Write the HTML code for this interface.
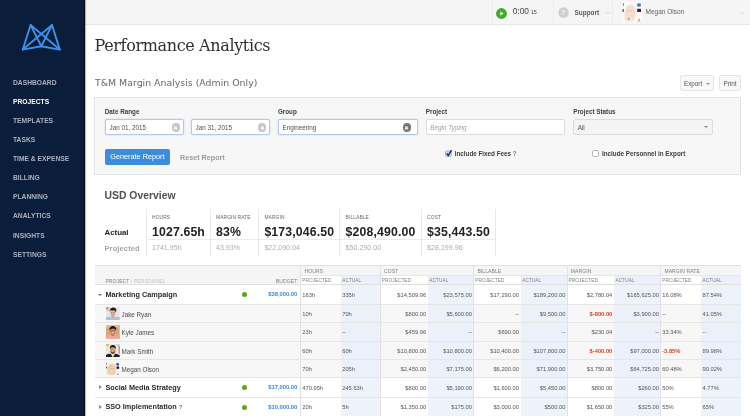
<!DOCTYPE html>
<html lang="en"><head><meta charset="utf-8"><title>Performance Analytics</title>
<style>
*{box-sizing:border-box;margin:0;padding:0}
html,body{width:750px;height:416px;overflow:hidden;background:#fff}
#wrap{position:absolute;left:0;top:0;width:750px;height:416px;will-change:transform;opacity:.999}
body{font-family:"Liberation Sans",Arial,sans-serif;color:#333;position:relative;-webkit-font-smoothing:antialiased}
.abs{position:absolute;white-space:nowrap}
#side{position:absolute;left:0;top:0;width:85.2px;height:416px;background:#0a1d3a;border-right:1.3px solid #050b16;box-shadow:.5px 0 1.6px rgba(0,0,0,.55);z-index:5}
#side .mi{position:absolute;left:13px;font-size:7.5px;font-weight:bold;letter-spacing:0;color:#a7b0bf;line-height:10px;white-space:nowrap;transform:scaleX(.893);transform-origin:0 50%}
#side .mi.on{color:#fff}
#top{position:absolute;left:84px;top:0;width:666px;height:25.3px;background:#f5f5f5;border-bottom:1px solid #e6e6e6}
.vd{position:absolute;top:0;width:1px;height:24px;background:#ececec}
h1{position:absolute;left:94.5px;top:34.3px;font-family:"DejaVu Serif","Liberation Serif",serif;font-weight:normal;font-size:16px;letter-spacing:-.36px;line-height:24px;color:#303030;white-space:nowrap}
h2{position:absolute;left:95px;top:76.5px;font-family:"DejaVu Sans","Liberation Sans",sans-serif;font-weight:normal;font-size:9.38px;line-height:12px;color:#6a6a6a;white-space:nowrap}
.btn{position:absolute;top:75px;height:15.5px;border:1px solid #e6e6e6;border-radius:2px;background:#f8f8f8;font-size:6.3px;line-height:15.4px;color:#555;text-align:center;white-space:nowrap}
#panel{position:absolute;left:94.4px;top:97px;width:646.8px;height:78px;background:#f7f7f7;border:1px solid #e3e3e3}
.lbl{position:absolute;top:107.2px;font-size:6.3px;font-weight:bold;color:#3c3c3c;line-height:9px;white-space:nowrap}
.inp{position:absolute;top:119.4px;height:16px;border:1px solid #b4c8ec;border-radius:2px;background:#fff;font-size:6.3px;line-height:15.2px;color:#505050;padding-left:3.7px;white-space:nowrap;box-shadow:0 0 1.6px rgba(140,175,235,.5)}
.inp.plain{border-color:#dcdcdc;box-shadow:none}
.clr{position:absolute;top:2.9px;width:8.6px;height:8.6px;border-radius:50%;background:#c6c6c6}
.clr.dk{background:#777}
.clr:before,.clr:after{content:"";position:absolute;left:3.9px;top:2.5px;width:.8px;height:3.6px;background:#fff;transform:rotate(45deg)}
.clr:after{transform:rotate(-45deg)}
.cb{position:absolute;top:150.6px;width:6px;height:6px;border:1px solid #9a9a9a;border-radius:1.5px;background:#fff}
.cbl{position:absolute;top:149.1px;font-size:6.3px;font-weight:bold;line-height:9px;color:#3c3c3c;white-space:nowrap}
#gen{position:absolute;left:104.8px;top:149.2px;width:65.2px;height:15.6px;background:#3d8bdb;border-radius:2px;color:#fff;font-size:7.3px;line-height:16.4px;text-align:center;white-space:nowrap}
#reset{position:absolute;left:180px;top:152.5px;font-size:7.2px;font-weight:bold;color:#9a9a9a;line-height:9px;white-space:nowrap}
#usd{position:absolute;left:104.5px;top:188.5px;font-size:10.4px;font-weight:bold;letter-spacing:0;color:#505050;line-height:13px;white-space:nowrap}
.ovl{position:absolute;top:209px;width:1px;height:46.6px;background:#e9e9e9}
.ovh{position:absolute;top:214.5px;font-size:4.9px;color:#666;line-height:6px;white-space:nowrap;letter-spacing:.1px}
.ovb{position:absolute;top:224.5px;font-size:12.3px;font-weight:bold;color:#222;line-height:15px;white-space:nowrap;letter-spacing:.13px}
.ovp{position:absolute;top:244.1px;font-size:7.1px;color:#adadad;line-height:9px;white-space:nowrap}
.row{position:absolute;left:95px;width:645.7px;border-bottom:1px solid #e6e6e6}
.row.u{background:#f7f7f7}
.row.p{background:#fff}
.c{position:absolute;top:0;bottom:0;font-size:5.75px;color:#555;padding-top:.2px;white-space:nowrap;display:flex;align-items:center}
.c.t{background:#edf2fb}
.row.u .c.t{background:#ebf0fa}
.c.r{justify-content:flex-end;padding-right:1.6px}
.c.l{padding-left:1.6px}
.c.neg{color:#e63c1c;font-weight:bold}
.vl{position:absolute;width:1px;background:#e2e2e2;top:265.3px;height:151px;z-index:2}
.th{position:absolute;font-size:5px;color:#808080;line-height:6px;white-space:nowrap;letter-spacing:.1px}
.pn{position:absolute;left:10.4px;font-size:7.3px;font-weight:bold;color:#2a2a2a;letter-spacing:0;padding-top:.4px;white-space:nowrap}
.un{position:absolute;left:26.5px;font-size:6.3px;color:#4a4a4a;padding-top:1px;white-space:nowrap}
.av{position:absolute;left:11px}
.dot{position:absolute;left:146.7px;width:5.2px;height:5.2px;border-radius:50%;background:#5aa81e}
.bud{position:absolute;right:443.4px;font-size:5.8px;padding-top:.4px;font-weight:bold;color:#3b86d8;white-space:nowrap}
.q{color:#3b86d8;font-weight:bold;font-size:6px}
</style></head><body><div id="wrap">

<div id="side">
<svg class="abs" style="left:18px;top:20px" width="48" height="34" viewBox="18 20 48 34" fill="none" stroke="#3f8fe6" stroke-width="1.9" stroke-linejoin="round" stroke-linecap="round"><path d="M30.6 25 L22.8 49.6 L41.3 46.2 L59.8 49.6 L52 25 L41.3 46.2 Z"/><path d="M30.6 25 L59.8 49.6"/><path d="M52 25 L22.8 49.6"/></svg>
<div class="mi" style="top:77.7px">DASHBOARD</div>
<div class="mi on" style="top:96.8px">PROJECTS</div>
<div class="mi" style="top:115.9px">TEMPLATES</div>
<div class="mi" style="top:135px">TASKS</div>
<div class="mi" style="top:154.1px">TIME &amp; EXPENSE</div>
<div class="mi" style="top:173.2px">BILLING</div>
<div class="mi" style="top:192.3px">PLANNING</div>
<div class="mi" style="top:211.4px">ANALYTICS</div>
<div class="mi" style="top:230.5px">INSIGHTS</div>
<div class="mi" style="top:249.6px">SETTINGS</div>
</div>
<div id="top">
<div class="vd" style="left:408px"></div>
<div class="vd" style="left:469px"></div>
<div class="vd" style="left:528px"></div>
<svg class="abs" style="left:412.2px;top:7.6px" width="11" height="11" viewBox="0 0 11 11"><circle cx="5.5" cy="5.5" r="5.45" fill="#3fae29"/><path d="M4.3 3.5 L7.7 5.5 L4.3 7.5 Z" fill="#fff"/></svg>
<div class="abs" style="left:428.8px;top:6.4px;font-size:8.3px;line-height:11px;color:#444;letter-spacing:0">0:00 <span style="font-size:5.4px;letter-spacing:0;margin-left:-.4px">15</span></div>
<svg class="abs" style="left:474.1px;top:6.9px" width="11" height="11" viewBox="0 0 11 11"><circle cx="5.5" cy="5.5" r="5.2" fill="#cfcfcf"/><text x="5.5" y="8" font-size="7" font-weight="bold" fill="#f3f3f3" text-anchor="middle" font-family="Liberation Sans, sans-serif">?</text></svg>
<div class="abs" style="left:490.6px;top:7.6px;font-size:6.4px;line-height:9px;color:#5a5a5a;font-weight:bold">Support</div>
<svg class="abs" style="left:521px;top:10.6px" width="6" height="4" viewBox="0 0 6 4" fill="none" stroke="#dcdcdc" stroke-width="1"><path d="M.5 .5 L3 3 L5.5 .5"/></svg>
<svg class="abs" style="left:538.2px;top:2.4px;filter:blur(.3px)" width="20" height="20" viewBox="0 0 20 20"><rect width="20" height="20" fill="#fbfaf9"/><path d="M2.5 17 Q1.5 4 8 2.2 Q14.5 2.6 14 12 Q13.6 17 11 19.4 L4 19.6 Z" fill="#f1e6d2"/><ellipse cx="7.8" cy="10" rx="4.4" ry="6.2" fill="#f6ddd3"/><rect x="5.6" y="8.6" width="1.4" height=".6" fill="#b59a8e"/><rect x="8.8" y="8.6" width="1.4" height=".6" fill="#b59a8e"/><rect x="5.8" y="16" width="1.6" height="1.6" fill="#b08a70"/><rect x=".9" y="1.2" width=".8" height="2.6" fill="#5a5a5a"/><rect x=".5" y="7" width="1.3" height="3" fill="#6a4636"/><rect x="15.2" y="1.4" width="3.6" height="3.2" fill="#2f7fe0"/><rect x="15.2" y="6.8" width="3.8" height="3.2" fill="#5a1812"/><path d="M15.4 19.4 L17.2 15.8 L18.6 19.4 Z" fill="#f3a28e"/></svg>
<div class="abs" style="left:561.5px;top:7.4px;font-size:6.5px;line-height:9px;color:#606060">Megan Olson</div>
<svg class="abs" style="left:655px;top:10.6px" width="6" height="4" viewBox="0 0 6 4" fill="none" stroke="#dcdcdc" stroke-width="1"><path d="M.5 .5 L3 3 L5.5 .5"/></svg>
</div>
<h1>Performance Analytics</h1>
<h2>T&amp;M Margin Analysis (Admin Only)</h2>
<div class="btn" style="left:680px;width:33.6px">Export <span style="display:inline-block;width:0;height:0;border-left:2.2px solid transparent;border-right:2.2px solid transparent;border-top:2.4px solid #999;vertical-align:.8px;margin-left:1.6px"></span></div>
<div class="btn" style="left:719.3px;width:21.5px">Print</div>
<div id="panel"></div>
<div class="lbl" style="left:104.8px">Date Range</div>
<div class="lbl" style="left:277.9px">Group</div>
<div class="lbl" style="left:425.8px">Project</div>
<div class="lbl" style="left:573.2px">Project Status</div>
<div class="inp" style="left:104.8px;width:79.4px">Jan 01, 2015<span class="clr" style="left:65.8px"></span></div>
<div class="inp" style="left:190.9px;width:79.4px">Jan 31, 2015<span class="clr" style="left:65.8px"></span></div>
<div class="inp" style="left:277.9px;width:139.8px">Engineering<span class="clr dk" style="left:123.7px"></span></div>
<div class="inp plain" style="left:425.6px;width:139.6px;color:#9aa0a8;font-style:italic">Begin Typing</div>
<div class="inp plain" style="left:573px;width:139.6px;background:#f4f4f4">All<span style="position:absolute;right:3.8px;top:6px;width:0;height:0;border-left:2.2px solid transparent;border-right:2.2px solid transparent;border-top:2.4px solid #888"></span></div>
<div id="gen">Generate Report</div><div id="reset">Reset Report</div>
<svg class="abs" style="left:445px;top:148.8px;overflow:visible" width="8" height="8.5" viewBox="0 0 8 8.5"><rect x=".5" y="1.9" width="5.8" height="5.6" rx="1.2" fill="#c9dcf6" stroke="#8eaedd" stroke-width=".8"/><path d="M1.6 4.5 L3.3 6.3 L6.6 1.1" fill="none" stroke="#16284d" stroke-width="1.35"/></svg>
<div class="cbl" style="left:454.7px">Include Fixed Fees <span style="color:#3b86d8">?</span></div>
<svg class="abs" style="left:592.4px;top:150.3px" width="7" height="7" viewBox="0 0 7 7"><rect x=".5" y=".5" width="6" height="6" rx="1.4" fill="#fff" stroke="#b6b6b6"/></svg>
<div class="cbl" style="left:602px">Include Personnel in Export</div>
<div id="usd">USD Overview</div>
<div class="ovl" style="left:145.7px"></div>
<div class="ovl" style="left:209.6px"></div>
<div class="ovl" style="left:258px"></div>
<div class="ovl" style="left:339.2px"></div>
<div class="ovl" style="left:420.8px"></div>
<div class="ovl" style="left:495.3px"></div>
<div class="abs" style="left:146.2px;top:239px;width:350px;height:1px;background:#ebebeb"></div>
<div class="abs" style="left:104.5px;top:226.5px;font-size:7.85px;font-weight:bold;color:#222;line-height:11px">Actual</div>
<div class="abs" style="left:104.5px;top:242.5px;font-size:7.5px;font-weight:bold;letter-spacing:.12px;color:#a4a4a4;line-height:11px">Projected</div>
<div class="ovh" style="left:152px">HOURS</div><div class="ovb" style="left:152px">1027.65h</div><div class="ovp" style="left:152px">1741.95h</div>
<div class="ovh" style="left:216px">MARGIN RATE</div><div class="ovb" style="left:216px">83%</div><div class="ovp" style="left:216px">43.93%</div>
<div class="ovh" style="left:264.4px">MARGIN</div><div class="ovb" style="left:264.4px">$173,046.50</div><div class="ovp" style="left:264.4px">$22,090.04</div>
<div class="ovh" style="left:345.6px">BILLABLE</div><div class="ovb" style="left:345.6px">$208,490.00</div><div class="ovp" style="left:345.6px">$50,290.00</div>
<div class="ovh" style="left:427.1px">COST</div><div class="ovb" style="left:427.1px">$35,443.50</div><div class="ovp" style="left:427.1px">$28,199.96</div>
<div class="abs" style="left:95px;top:264.8px;width:645.7px;height:20.4px;background:#f5f5f5;border-top:1px solid #e0e0e0"></div>
<div class="abs" style="left:300.7px;top:274.6px;width:39.9px;height:10.6px;background:#fff;border-top:1px solid #e6e6e6"></div>
<div class="th" style="font-size:4.7px;left:302.3px;top:277.9px">PROJECTED</div>
<div class="abs" style="left:340.6px;top:274.6px;width:39.6px;height:10.6px;background:#ebf0fa;border-top:1px solid #e6e6e6"></div>
<div class="th" style="font-size:4.7px;left:342.2px;top:277.9px">ACTUAL</div>
<div class="abs" style="left:380.2px;top:274.6px;width:47.5px;height:10.6px;background:#fff;border-top:1px solid #e6e6e6"></div>
<div class="th" style="font-size:4.7px;left:381.8px;top:277.9px">PROJECTED</div>
<div class="abs" style="left:427.7px;top:274.6px;width:45.9px;height:10.6px;background:#ebf0fa;border-top:1px solid #e6e6e6"></div>
<div class="th" style="font-size:4.7px;left:429.3px;top:277.9px">ACTUAL</div>
<div class="abs" style="left:473.6px;top:274.6px;width:47px;height:10.6px;background:#fff;border-top:1px solid #e6e6e6"></div>
<div class="th" style="font-size:4.7px;left:475.2px;top:277.9px">PROJECTED</div>
<div class="abs" style="left:520.6px;top:274.6px;width:46.4px;height:10.6px;background:#ebf0fa;border-top:1px solid #e6e6e6"></div>
<div class="th" style="font-size:4.7px;left:522.2px;top:277.9px">ACTUAL</div>
<div class="abs" style="left:567px;top:274.6px;width:46.9px;height:10.6px;background:#fff;border-top:1px solid #e6e6e6"></div>
<div class="th" style="font-size:4.7px;left:568.6px;top:277.9px">PROJECTED</div>
<div class="abs" style="left:613.9px;top:274.6px;width:46.7px;height:10.6px;background:#ebf0fa;border-top:1px solid #e6e6e6"></div>
<div class="th" style="font-size:4.7px;left:615.5px;top:277.9px">ACTUAL</div>
<div class="abs" style="left:660.6px;top:274.6px;width:40.3px;height:10.6px;background:#fff;border-top:1px solid #e6e6e6"></div>
<div class="th" style="font-size:4.7px;left:662.2px;top:277.9px">PROJECTED</div>
<div class="abs" style="left:700.9px;top:274.6px;width:39.8px;height:10.6px;background:#ebf0fa;border-top:1px solid #e6e6e6"></div>
<div class="th" style="font-size:4.7px;left:702.5px;top:277.9px">ACTUAL</div>
<div class="th" style="left:304.5px;top:267.7px">HOURS</div>
<div class="th" style="left:384px;top:267.7px">COST</div>
<div class="th" style="left:477.4px;top:267.7px">BILLABLE</div>
<div class="th" style="left:570.8px;top:267.7px">MARGIN</div>
<div class="th" style="left:664.4px;top:267.7px">MARGIN RATE</div>
<div class="abs" style="left:95px;top:284.4px;width:645.7px;height:1px;background:#e0e0e0;z-index:1"></div>
<div class="th" style="left:105.4px;top:277.9px">PROJECT <span style="color:#c4c4c4">/ PERSONNEL</span></div>
<div class="th" style="left:270px;top:277.9px;width:27.3px;text-align:right">BUDGET</div>
<div class="row p" style="top:285px;height:20px">
<span class="abs" style="left:2.6px;top:8.5px;width:0;height:0;border-left:2.3px solid transparent;border-right:2.3px solid transparent;border-top:2.6px solid #777"></span>
<span class="pn" style="top:0;line-height:19px">Marketing Campaign</span>
<span class="dot" style="top:7px"></span>
<span class="bud" style="top:0;line-height:19px">$38,000.00</span>
<span class="c l" style="left:205.7px;width:39.9px">163h</span>
<span class="c l t" style="left:245.6px;width:39.6px">335h</span>
<span class="c r" style="left:285.2px;width:47.5px">$14,509.96</span>
<span class="c r t" style="left:332.7px;width:45.9px">$23,575.00</span>
<span class="c r" style="left:378.6px;width:47px">$17,290.00</span>
<span class="c r t" style="left:425.6px;width:46.4px">$189,200.00</span>
<span class="c r" style="left:472px;width:46.9px">$2,780.04</span>
<span class="c r t" style="left:518.9px;width:46.7px">$165,625.00</span>
<span class="c l" style="left:565.6px;width:40.3px">16.08%</span>
<span class="c l t" style="left:605.9px;width:39.8px">87.54%</span>
</div>
<div class="row u" style="top:305px;height:18px">
<svg class="av" width="13.7" height="13.7" viewBox="0 0 14 14" style="filter:blur(.25px);top:1.8px"><rect width="14" height="14" fill="#e4e6e8"/><rect x="0" y="0" width="3.2" height="4" fill="#d9c9c9"/><rect x=".3" y=".6" width="2" height="1.1" fill="#c8574f"/><path d="M0 14 L0 10.6 Q3 9.4 5 10.4 L9 10.4 Q11.5 9.4 14 10.8 L14 14 Z" fill="#a4c6d8"/><rect x="5.6" y="8.6" width="2.8" height="2.6" fill="#d3a58f"/><ellipse cx="7" cy="6.3" rx="2.7" ry="3.5" fill="#dcb39f"/><path d="M3.9 5.4 Q3.2 1.2 6.4 .7 Q8 .1 9.6 1.2 Q11.2 2.2 10.1 5.5 Q9.6 3.6 8.4 3.3 Q6 3.6 4.6 3.4 Q4 4 3.9 5.4 Z" fill="#1d1a1a"/><rect x="5.3" y="5.5" width="1.1" height=".5" fill="#5a4238"/><rect x="7.6" y="5.5" width="1.1" height=".5" fill="#5a4238"/><rect x="6.1" y="8" width="1.8" height=".45" fill="#b57f70"/></svg>
<span class="un" style="top:0;line-height:17px">Jake Ryan</span>
<span class="c l" style="left:205.7px;width:39.9px">10h</span>
<span class="c l t" style="left:245.6px;width:39.6px">70h</span>
<span class="c r" style="left:285.2px;width:47.5px">$800.00</span>
<span class="c r t" style="left:332.7px;width:45.9px">$5,600.00</span>
<span class="c r" style="left:378.6px;width:47px">--</span>
<span class="c r t" style="left:425.6px;width:46.4px">$9,500.00</span>
<span class="c r neg" style="left:472px;width:46.9px">$-800.00</span>
<span class="c r t" style="left:518.9px;width:46.7px">$3,900.00</span>
<span class="c l" style="left:565.6px;width:40.3px">--</span>
<span class="c l t" style="left:605.9px;width:39.8px">41.05%</span>
</div>
<div class="row u" style="top:323px;height:19px">
<svg class="av" width="13.7" height="13.7" viewBox="0 0 14 14" style="filter:blur(.25px);top:2.3px"><rect width="14" height="14" fill="#d9a878"/><rect x="0" y="0" width="14" height="3" fill="#e2b88c"/><path d="M0 14 L0 11 Q3.5 9.3 7 10.6 Q10.5 9.3 14 11 L14 14 Z" fill="#f1a596"/><rect x="5.6" y="8.8" width="2.8" height="2.4" fill="#b67a5c"/><ellipse cx="7" cy="6.4" rx="2.9" ry="3.5" fill="#c48c6c"/><path d="M3.6 5.8 Q2.8 1.6 7 1 Q11.2 1.6 10.4 5.8 Q9.8 3.6 7 3.5 Q4.2 3.6 3.6 5.8 Z" fill="#1b1513"/><rect x="5.2" y="5.6" width="1.2" height=".5" fill="#3a2a22"/><rect x="7.6" y="5.6" width="1.2" height=".5" fill="#3a2a22"/><path d="M5.5 7.7 Q7 9 8.5 7.7 Z" fill="#f4ece6"/></svg>
<span class="un" style="top:0;line-height:18px">Kyle James</span>
<span class="c l" style="left:205.7px;width:39.9px">23h</span>
<span class="c l t" style="left:245.6px;width:39.6px">--</span>
<span class="c r" style="left:285.2px;width:47.5px">$459.96</span>
<span class="c r t" style="left:332.7px;width:45.9px">--</span>
<span class="c r" style="left:378.6px;width:47px">$690.00</span>
<span class="c r t" style="left:425.6px;width:46.4px">--</span>
<span class="c r" style="left:472px;width:46.9px">$230.04</span>
<span class="c r t" style="left:518.9px;width:46.7px">--</span>
<span class="c l" style="left:565.6px;width:40.3px">33.34%</span>
<span class="c l t" style="left:605.9px;width:39.8px">--</span>
</div>
<div class="row u" style="top:342px;height:18px">
<svg class="av" width="13.7" height="13.7" viewBox="0 0 14 14" style="filter:blur(.25px);top:1.8px"><rect width="14" height="14" fill="#e9e7e3"/><rect x="0" y="0" width="3" height="2.2" fill="#e8c23e"/><rect x="13" y="2" width="1" height="8" fill="#c4675c"/><rect x="10.5" y="0" width="3.5" height="2" fill="#cfd3d6"/><path d="M0 14 L0 11.2 Q3 9.4 5.2 10.2 L7 13 L8.8 10.2 Q11 9.6 14 11.6 L14 14 Z" fill="#1e222a"/><path d="M5.2 10.2 L7 13.6 L8.8 10.2 Z" fill="#f2f2f2"/><rect x="5.7" y="8.6" width="2.6" height="2" fill="#c99478"/><ellipse cx="7" cy="6" rx="2.8" ry="3.6" fill="#d9a98c"/><path d="M4.3 6.6 Q4.6 10 7 10.1 Q9.4 10 9.7 6.6 Q9 8.2 7 8.1 Q5 8.2 4.3 6.6 Z" fill="#6b4c3c"/><path d="M4 5.2 Q3.4 1.2 7 .9 Q10.6 1.2 10 5.2 Q9.4 3.2 7 3.2 Q4.6 3.2 4 5.2 Z" fill="#2a1e18"/><rect x="5.3" y="5.2" width="1.1" height=".5" fill="#3a2a22"/><rect x="7.6" y="5.2" width="1.1" height=".5" fill="#3a2a22"/></svg>
<span class="un" style="top:0;line-height:17px">Mark Smith</span>
<span class="c l" style="left:205.7px;width:39.9px">60h</span>
<span class="c l t" style="left:245.6px;width:39.6px">60h</span>
<span class="c r" style="left:285.2px;width:47.5px">$10,800.00</span>
<span class="c r t" style="left:332.7px;width:45.9px">$10,800.00</span>
<span class="c r" style="left:378.6px;width:47px">$10,400.00</span>
<span class="c r t" style="left:425.6px;width:46.4px">$107,800.00</span>
<span class="c r neg" style="left:472px;width:46.9px">$-400.00</span>
<span class="c r t" style="left:518.9px;width:46.7px">$97,000.00</span>
<span class="c l neg" style="left:565.6px;width:40.3px">-3.85%</span>
<span class="c l t" style="left:605.9px;width:39.8px">89.98%</span>
</div>
<div class="row u" style="top:360px;height:18px">
<svg class="av" width="13.7" height="13.7" viewBox="0 0 14 14" style="filter:blur(.25px);top:1.8px"><rect width="14" height="14" fill="#f6f3f0"/><path d="M1 11 Q.6 3 5.6 1.6 Q10.6 1.8 10.4 8 Q10.2 12 8 13.4 L2.4 13.6 Z" fill="#ead7ab"/><ellipse cx="6.1" cy="7.6" rx="2.9" ry="3.7" fill="#f1cdb8"/><path d="M2.6 6.6 Q3.4 2.6 7 3 Q5.6 4.6 2.6 6.6 Z" fill="#e3c98f"/><rect x="4.5" y="6.8" width="1" height=".45" fill="#7a5c4c"/><rect x="6.8" y="6.8" width="1" height=".45" fill="#7a5c4c"/><path d="M4.8 9.3 Q6.1 10.3 7.4 9.3 Z" fill="#fff"/><rect x="10.6" y="1.2" width="2.6" height="2.4" fill="#1d43cf"/><rect x="10.8" y="4.6" width="2.6" height="2.4" fill="#15110f"/><rect x="0.3" y="1" width=".7" height="1.6" fill="#555"/><rect x="0.2" y="4.6" width=".9" height="2" fill="#5a3a2a"/><path d="M10.6 13.6 L12 10.8 L13.2 13.6 Z" fill="#ef8f7a"/></svg>
<span class="un" style="top:0;line-height:17px">Megan Olson</span>
<span class="c l" style="left:205.7px;width:39.9px">70h</span>
<span class="c l t" style="left:245.6px;width:39.6px">205h</span>
<span class="c r" style="left:285.2px;width:47.5px">$2,450.00</span>
<span class="c r t" style="left:332.7px;width:45.9px">$7,175.00</span>
<span class="c r" style="left:378.6px;width:47px">$6,200.00</span>
<span class="c r t" style="left:425.6px;width:46.4px">$71,900.00</span>
<span class="c r" style="left:472px;width:46.9px">$3,750.00</span>
<span class="c r t" style="left:518.9px;width:46.7px">$64,725.00</span>
<span class="c l" style="left:565.6px;width:40.3px">60.48%</span>
<span class="c l t" style="left:605.9px;width:39.8px">90.02%</span>
</div>
<div class="row p" style="top:378px;height:20px">
<span class="abs" style="left:3.6px;top:7.4px;width:0;height:0;border-top:2.5px solid transparent;border-bottom:2.5px solid transparent;border-left:3px solid #8a8a8a"></span>
<span class="pn" style="top:0;line-height:19px">Social Media Strategy</span>
<span class="dot" style="top:7px"></span>
<span class="bud" style="top:0;line-height:19px">$17,000.00</span>
<span class="c l" style="left:205.7px;width:39.9px">470.95h</span>
<span class="c l t" style="left:245.6px;width:39.6px">245.63h</span>
<span class="c r" style="left:285.2px;width:47.5px">$800.00</span>
<span class="c r t" style="left:332.7px;width:45.9px">$5,190.00</span>
<span class="c r" style="left:378.6px;width:47px">$1,600.00</span>
<span class="c r t" style="left:425.6px;width:46.4px">$5,450.00</span>
<span class="c r" style="left:472px;width:46.9px">$800.00</span>
<span class="c r t" style="left:518.9px;width:46.7px">$260.00</span>
<span class="c l" style="left:565.6px;width:40.3px">50%</span>
<span class="c l t" style="left:605.9px;width:39.8px">4.77%</span>
</div>
<div class="row p" style="top:398px;height:19px">
<span class="abs" style="left:3.6px;top:6.9px;width:0;height:0;border-top:2.5px solid transparent;border-bottom:2.5px solid transparent;border-left:3px solid #8a8a8a"></span>
<span class="pn" style="top:0;line-height:18px">SSO Implementation <span class="q">?</span></span>
<span class="dot" style="top:6.5px"></span>
<span class="bud" style="top:0;line-height:18px">$10,000.00</span>
<span class="c l" style="left:205.7px;width:39.9px">20h</span>
<span class="c l t" style="left:245.6px;width:39.6px">5h</span>
<span class="c r" style="left:285.2px;width:47.5px">$1,350.00</span>
<span class="c r t" style="left:332.7px;width:45.9px">$175.00</span>
<span class="c r" style="left:378.6px;width:47px">$3,000.00</span>
<span class="c r t" style="left:425.6px;width:46.4px">$500.00</span>
<span class="c r" style="left:472px;width:46.9px">$1,650.00</span>
<span class="c r t" style="left:518.9px;width:46.7px">$325.00</span>
<span class="c l" style="left:565.6px;width:40.3px">55%</span>
<span class="c l t" style="left:605.9px;width:39.8px">65%</span>
</div>
<div class="vl" style="left:300.2px"></div>
<div class="vl" style="left:379.7px"></div>
<div class="vl" style="left:473.1px"></div>
<div class="vl" style="left:566.5px"></div>
<div class="vl" style="left:660.1px"></div>
</div></body></html>
